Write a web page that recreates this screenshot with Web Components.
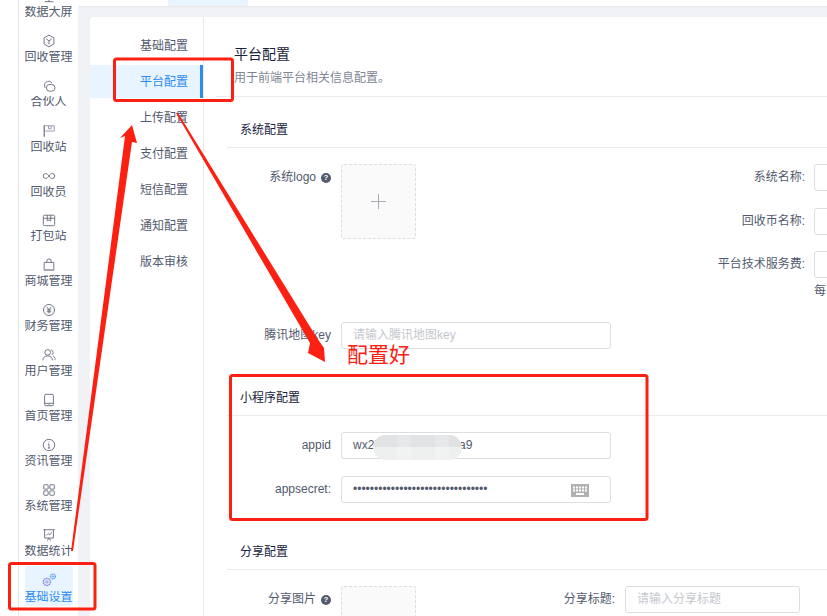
<!DOCTYPE html>
<html lang="zh-CN"><head><meta charset="utf-8"><title>平台配置</title>
<style>
html,body{margin:0;padding:0;background:#f0f2f5;overflow:hidden}
body{width:827px;height:616px;font:12px "Liberation Sans","Noto Sans CJK SC",sans-serif;color:#515a6e}
</style></head><body>
<x-app>
  <x-sidebar slot="side">
    <x-nav-item label="数据大屏" icon="screen"></x-nav-item>
    <x-nav-item label="回收管理" icon="cube"></x-nav-item>
    <x-nav-item label="合伙人" icon="link"></x-nav-item>
    <x-nav-item label="回收站" icon="flag"></x-nav-item>
    <x-nav-item label="回收员" icon="inf"></x-nav-item>
    <x-nav-item label="打包站" icon="box"></x-nav-item>
    <x-nav-item label="商城管理" icon="bag"></x-nav-item>
    <x-nav-item label="财务管理" icon="yen"></x-nav-item>
    <x-nav-item label="用户管理" icon="user"></x-nav-item>
    <x-nav-item label="首页管理" icon="phone"></x-nav-item>
    <x-nav-item label="资讯管理" icon="info"></x-nav-item>
    <x-nav-item label="系统管理" icon="grid"></x-nav-item>
    <x-nav-item label="数据统计" icon="chart"></x-nav-item>
    <x-nav-item label="基础设置" icon="gear" active></x-nav-item>
  </x-sidebar>
  <x-submenu slot="sub">
    <x-sub-item>基础配置</x-sub-item>
    <x-sub-item active>平台配置</x-sub-item>
    <x-sub-item>上传配置</x-sub-item>
    <x-sub-item>支付配置</x-sub-item>
    <x-sub-item>短信配置</x-sub-item>
    <x-sub-item>通知配置</x-sub-item>
    <x-sub-item>版本审核</x-sub-item>
  </x-submenu>
  <x-page-head slot="main" heading="平台配置" sub="用于前端平台相关信息配置。"></x-page-head>
  <x-section slot="main" heading="系统配置" style="margin-top:1px">
    <x-columns style="--left:384px">
      <div slot="left"><x-field lw="104" label="系统logo" help><x-upload></x-upload></x-field></div>
      <div slot="right">
        <x-field lw="194" label="系统名称:" tight><x-input w="60"></x-input></x-field>
        <x-field lw="194" label="回收币名称:" tight style="margin-bottom:16px"><x-input w="60"></x-input></x-field>
        <x-field lw="194" label="平台技术服务费:" tight nomargin><x-input w="60"></x-input></x-field>
        <x-hint>每</x-hint>
      </div>
    </x-columns>
    <x-field lw="104" label="腾讯地图key"><x-input w="270" placeholder="请输入腾讯地图key"></x-input></x-field>
  </x-section>
  <x-section slot="main" heading="小程序配置">
    <x-field lw="104" label="appid"><x-input w="270" value="wx25" blur tail="a9"></x-input></x-field>
    <x-field lw="104" label="appsecret:"><x-input w="270" password value="••••••••••••••••••••••••••••••••"></x-input></x-field>
  </x-section>
  <x-section slot="main" heading="分享配置">
    <x-columns style="--left:189px">
      <div slot="left"><x-field lw="104" label="分享图片" help><x-upload empty></x-upload></x-field></div>
      <div slot="right"><x-field lw="199" label="分享标题:"><x-input w="175" placeholder="请输入分享标题"></x-input></x-field></div>
    </x-columns>
  </x-section>
  <x-annotations slot="over"></x-annotations>
</x-app>
<script>
const mk=(name,css,html)=>{
  class C extends HTMLElement{
    constructor(){super();this.attachShadow({mode:"open"})}
    connectedCallback(){
      const a=n=>this.getAttribute(n);
      this.shadowRoot.innerHTML=`<style>${css}</style>`+(typeof html==="function"?html(a,this):html);
    }
  }
  customElements.define(name,C);
};
const FONT='"Liberation Sans","Noto Sans CJK SC",sans-serif';
const icons={
 screen:'<path d="M8 14.500V10M3 14.500h10"/>',
 cube:'<path d="M8 1.200l5.600 3.200v7L8 14.800l-5.600-3.400v-7zM4.800 5.400L8 8l3.200-2.600M8 8v4"/>',
 link:'<path d="M11.500 4.500A4.700 4.700 0 1 0 3.800 10.200"/><rect x="5" y="6.200" width="9.800" height="7.800" rx="3.900"/>',
 flag:'<path d="M2.500 1.500v13" stroke-width="1.300"/><path d="M2.500 2h11.500v6H2.500M7.500 2v3.500h3V2" stroke="#8f94a3"/>',
 inf:'<path d="M8 8C6.800 6.200 5.600 5.200 4.200 5.200a2.800 2.800 0 0 0 0 5.600C5.600 10.800 6.800 9.800 8 8c1.200-1.800 2.400-2.800 3.800-2.800a2.800 2.800 0 0 1 0 5.600c-1.400 0-2.600-1-3.800-2.800z"/>',
 box:'<path d="M3 2.500h10a1.500 1.500 0 0 1 1.500 1.500v9a1.500 1.500 0 0 1-1.500 1.500H3A1.500 1.500 0 0 1 1.500 13V4A1.500 1.500 0 0 1 3 2.500zM1.500 6h13M6 2.500V9l2-1 2 1V2.500"/>',
 bag:'<path d="M2.500 5h11v9h-11zM5.500 5V3.500a2.500 2.500 0 0 1 5 0V5"/><path d="M2.500 13.500h11" stroke-width="2" stroke="#aab"/>',
 yen:'<circle cx="8" cy="8" r="6.300"/><path d="M5.500 4.500L8 8l2.500-3.500M5.500 8h5M5.500 10h5M8 8v4"/>',
 user:'<circle cx="6.500" cy="5" r="3.200"/><path d="M1 14c0-3 2.400-5 5.500-5S12 11 12 14M10.500 2.200a3.200 3.200 0 0 1 .5 5.800M12.500 9c1.500.7 2.500 2.600 2.500 4.500"/>',
 phone:'<rect x="3" y="1.500" width="10" height="13" rx="1.500"/><path d="M3 11.800h10M7.500 13.200h1"/>',
 info:'<circle cx="8" cy="8" r="6.500"/><path d="M8 4.200v1M8 7v4.500M6.800 7H8M6.800 11.500h2.400"/>',
 grid:'<rect x="2" y="2" width="5" height="5" rx=".6"/><rect x="9" y="2" width="5" height="5" rx=".6"/><rect x="2" y="9" width="5" height="5" rx=".6"/><rect x="9" y="9" width="5" height="5" rx=".6"/>',
 chart:'<path d="M1.500 2h13M3 2v9.500h10V2M4.800 8.500l2.200-2.200 1.800 1.700 2.400-3M8 11.500l-2 3M8 11.500l2 3"/>',
 gear:'<g stroke="#8a8fe0"><circle cx="5.600" cy="10.200" r="4" stroke-dasharray="1.800 .7" stroke-width="1.700"/><circle cx="5.600" cy="10.200" r="1.400"/></g><g stroke="#5b9df0"><circle cx="12.400" cy="4" r="2.800" stroke-dasharray="1.500 .5" stroke-width="1.500"/><circle cx="12.400" cy="4" r=".8"/></g>'
};
mk("x-app",`
 :host{display:flex;width:827px;height:616px;overflow:hidden;position:relative;background:#f0f2f5}
 .strip{width:18px;flex:none;background:#fff;border-right:1px solid #e2e4e8}
 .col{flex:1;min-width:0;display:flex;flex-direction:column}
 .top{height:6px;flex:none;background:#fff;padding-left:90px;box-shadow:0 1px 2px rgba(0,0,0,.05);position:relative}
 .tab{display:block;width:80px;height:100%;background:#e8f4ff}
 .panel{flex:1;margin:11px 0 0 12px;background:#fff;border-radius:4px 0 0 0;display:flex;min-height:0}
 .main{flex:1;min-width:0;overflow:hidden}
`,`<div class="strip"></div><slot name="side"></slot>
 <div class="col"><div class="top"><span class="tab"></span></div>
 <div class="panel"><slot name="sub"></slot><div class="main"><slot name="main"></slot></div></div></div>
 <slot name="over"></slot>`);
mk("x-sidebar",`
 :host{display:block;width:59px;flex:none;background:#fff;height:616px;overflow:hidden}
 .in{display:flex;flex-direction:column;gap:4.9px;margin-top:-18px;align-items:center}
`,`<div class="in"><slot></slot></div>`);
mk("x-nav-item",`
 :host{display:flex;flex-direction:column;align-items:center;width:48px;height:40px;border-radius:3px;flex:none;color:#515a6e}
 :host([active]){background:#e8f4ff;color:#2d8cf0}
 svg{width:14px;height:14px;margin-top:7px;flex:none;fill:none;stroke:#5f6679;stroke-width:1}
 .l{font:12px/12px ${FONT};height:11px;overflow:hidden;margin-top:3px;white-space:nowrap}
 :host([active]) .l{height:12px;margin-top:4px}
`,(a)=>`<svg viewBox="0 0 16 16">${icons[a("icon")]}</svg><div class="l">${a("label")}</div>`);
mk("x-submenu",`
 :host{display:flex;flex-direction:column;gap:3px;width:113px;flex:none;padding-top:12px;border-right:1px solid #e8eaec;box-sizing:content-box}
`,`<slot></slot>`);
mk("x-sub-item",`
 :host{display:flex;align-items:center;height:33px;padding:0 0 2px 50px;font:12px ${FONT};color:#515a6e;box-sizing:border-box;flex:none}
 :host([active]){color:#2d8cf0;background:#e8f4ff;box-shadow:inset -3px 0 0 #2d8cf0}
`,`<slot></slot>`);
mk("x-page-head",`
 :host{display:block;margin-left:12px;padding:27px 0 8px 18px;border-bottom:1px solid #e8eaec;height:44px}
 h1{margin:0;font:14px/20px ${FONT};color:#17233d}
 p{margin:4px 0 0;font:12px/20px ${FONT};color:#808695}
`,a=>`<h1>${a("heading")}</h1><p>${a("sub")}</p>`);
mk("x-section",`
 :host{display:block;margin-left:23px}
 h2{margin:0;height:18px;padding:23px 0 8px 13px;border-bottom:1px solid #e8eaec;font:12px/18px ${FONT};color:#17233d}
 .b{padding-top:16px}
`,a=>`<h2>${a("heading")}</h2><div class="b"><slot></slot></div>`);
mk("x-columns",`
 :host{display:flex;align-items:flex-start}
 .l{width:var(--left);flex:none;height:158px}
 .r{flex:1;min-width:0}
`,`<div class="l"><slot name="left"></slot></div><div class="r"><slot name="right"></slot></div>`);
mk("x-field",`
 :host{display:flex;align-items:flex-start;margin-bottom:17px;white-space:nowrap}
 :host([nomargin]){margin-bottom:0}
 .lab{flex:none;text-align:right;font:12px/27px ${FONT};color:#515a6e;display:flex;justify-content:flex-end;align-items:center;height:27px}
 .q{display:inline-flex;width:10px;height:10px;border-radius:50%;background:#515a6e;color:#fff;font:bold 8px/10px ${FONT};justify-content:center;margin-left:5px}
`,(a)=>{const lw=+a("lw");const m=a("tight")!==null?9:10;
 return `<div class="lab" style="width:${lw}px;margin-right:${m}px">${a("label")}${a("help")!==null?'<span class="q">?</span>':''}</div><slot></slot>`});
mk("x-upload",`
 :host{display:block;width:75px;height:75px;box-sizing:border-box;border:1px dashed #dcdee2;border-radius:3px;background:#fafafa;position:relative;flex:none}
 svg{display:block;position:absolute;left:50%;top:50%;margin:-7.5px;width:15px;height:15px;stroke:#a8adb5;fill:none}
`,(a)=>`<svg viewBox="0 0 15 15"><path d="M7.500 0v15M0 7.500h15"/></svg>`);
mk("x-input",`
 :host{display:block;flex:none;height:27px;box-sizing:border-box;border:1px solid #dcdee2;border-radius:3px;background:#fff;position:relative;overflow:visible}
 .t{position:absolute;left:11px;top:0;font:12px/25px ${FONT};white-space:nowrap}
 .ph{color:#c5c8ce}.v{color:#515a6e}
 .blur{position:absolute;left:31px;top:2px;width:89px;height:25px;border-radius:13px;background:linear-gradient(#e0e2e3 0 50%,#eef0f0 50% 100%);z-index:1;overflow:hidden}
 .blur i{position:absolute;top:0;bottom:0;width:14px;background:rgba(255,255,255,.22)}
 .tail{position:absolute;left:117px;top:0;font:12px/25px ${FONT};color:#515a6e}
 svg{position:absolute;left:229px;top:7px;width:18px;height:13px}
`,(a,el)=>{
 el.style.width=a("w")+"px";
 const ph=a("placeholder"),v=a("value");
 let h="";
 if(ph)h+=`<span class="t ph">${ph}</span>`;
 if(v)h+=`<span class="t v">${v}</span>`;
 if(a("blur")!==null)h+=`<span class="tail">${a("tail")}</span><div class="blur"><i style="left:24px"></i><i style="left:62px"></i></div>`;
 if(a("password")!==null)h+=`<svg viewBox="0 0 18 13"><rect width="18" height="13" fill="#b1b1b1"/><path d="M2 3.500h14M2 6.500h14" stroke="#fff" stroke-width="2" stroke-dasharray="2 1"/><path d="M5 10h8" stroke="#fff" stroke-width="2"/></svg>`;
 return h;
});
mk("x-hint",`
 :host{display:block;margin:6px 0 0 203px;font:12px/14px ${FONT};color:#515a6e;white-space:nowrap}
`,`<slot></slot>`);
mk("x-annotations",`
 :host{position:absolute;left:0;top:0;width:827px;height:616px;pointer-events:none;display:block}
 svg{position:absolute;inset:0;width:827px;height:616px}
 .t{position:absolute;left:347px;top:340px;font:21px/26px "Noto Sans CJK SC",sans-serif;color:#fb2012;white-space:nowrap}
`,`<svg viewBox="0 0 827 616">
 <g fill="none" stroke="#fb2012" stroke-width="3" stroke-linejoin="round">
  <rect x="114.500" y="59" width="118" height="41.500" rx="2"/>
  <rect x="9.500" y="563.500" width="85.500" height="45.500" rx="2"/>
  <rect x="230.500" y="375.500" width="416.500" height="144" rx="2"/>
 </g>
 <g fill="#fb2012">
  <polygon points="71,551 73,551 132,142 137,143 132,125 120,138 125,136"/>
  <polygon points="176,113 178,113 317,338 324,348 325,362 308,353 310,343"/>
 </g></svg><div class="t">配置好</div>`);
</script>
</body></html>
